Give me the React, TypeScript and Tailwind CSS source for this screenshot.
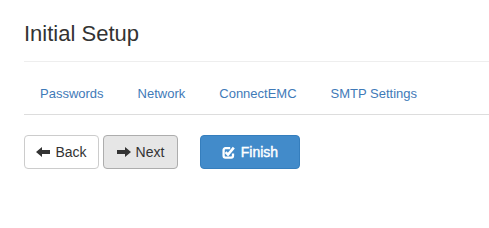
import React from 'react';

function ArrowLeft() {
  return (
    <svg width="14" height="10" viewBox="0 0 14 10" className="inline-block">
      <polygon points="0,5 6,0 6,3 14,3 14,7 6,7 6,10" fill="currentColor" />
    </svg>
  );
}

function ArrowRight() {
  return (
    <svg width="14" height="10" viewBox="0 0 14 10" className="inline-block">
      <polygon points="14,5 8,0 8,3 0,3 0,7 8,7 8,10" fill="currentColor" />
    </svg>
  );
}

function CheckSquare() {
  return (
    <svg width="13" height="13" viewBox="0 0 13 13" className="inline-block">
      <path d="M8.2 2.2H3.4a1.8 1.8 0 0 0-1.8 1.8v5.8a1.8 1.8 0 0 0 1.8 1.8h5.8a1.8 1.8 0 0 0 1.8-1.8V7.6" fill="none" stroke="currentColor" strokeWidth="2.3" />
      <polyline points="3.6,6.2 6,8.6 11.8,1.6" fill="none" stroke="currentColor" strokeWidth="2.6" />
    </svg>
  );
}

export default function App() {
  const tabs = ['Passwords', 'Network', 'ConnectEMC', 'SMTP Settings'];

  return (
    <div className="w-[489px] h-[228px] bg-white pl-6 font-['Liberation_Sans',Arial,sans-serif] text-[#333]">
      <h3 className="pt-[21px] pb-[14px] text-[22px] leading-[26px] border-b border-[#eee]">Initial Setup</h3>

      <ul className="mt-[12px] flex border-b border-[#ddd]">
        {tabs.map(t => (
          <li key={t} className="mr-[2px]">
            <a href="#" className="block px-4 py-[10px] text-[13px] leading-5 text-[#3f7ab8]">{t}</a>
          </li>
        ))}
      </ul>

      <div className="mt-5 flex items-center">
        <button className="w-[75px] h-[34px] flex items-center justify-center gap-[5px] border border-[#ccc] rounded bg-white text-[14px] text-[#333]">
          <ArrowLeft />
          <span>Back</span>
        </button>
        <button className="ml-[4px] w-[75px] h-[34px] flex items-center justify-center gap-[5px] border border-[#adadad] rounded bg-[#e6e6e6] text-[14px] text-[#333]">
          <ArrowRight />
          <span>Next</span>
        </button>
        <button className="ml-[22px] w-[100px] h-[34px] flex items-center justify-center gap-[6px] border border-[#357ebd] rounded bg-[#428bca] text-[14px] text-white [-webkit-text-stroke:0.4px_white]">
          <CheckSquare />
          <span>Finish</span>
        </button>
      </div>
    </div>
  );
}
